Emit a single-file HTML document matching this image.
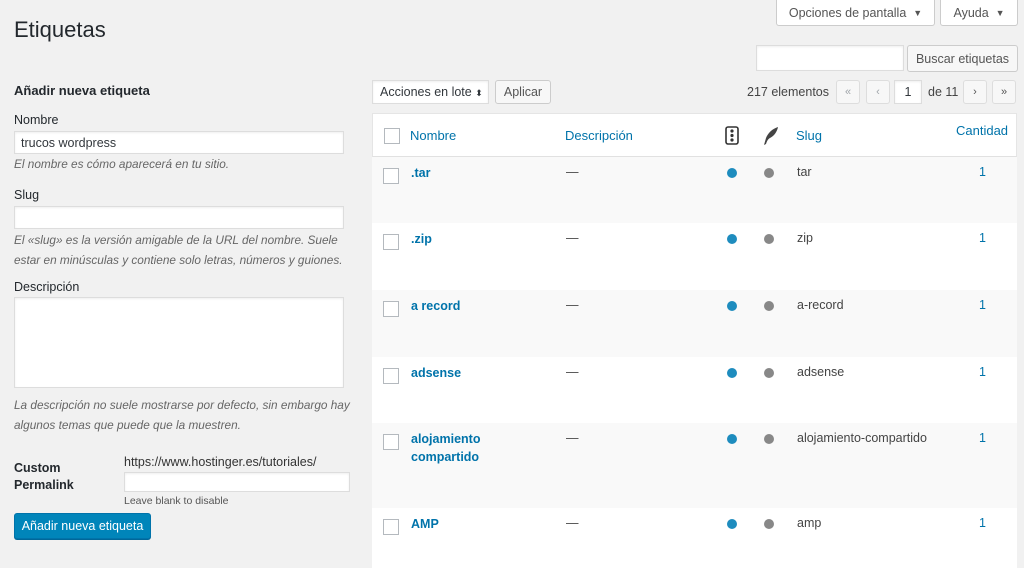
<!DOCTYPE html>
<html><head><meta charset="utf-8"><style>
*{box-sizing:border-box}
body{margin:0;width:1024px;height:563px;overflow:hidden;background:#f1f1f1;font-family:"Liberation Sans",Arial,sans-serif;font-size:12.5px;color:#444;position:relative}
.a{position:absolute;white-space:nowrap}
.btn{position:absolute;border:1px solid #ccc;background:#f7f7f7;border-radius:3px;color:#555;font-size:12.5px;display:flex;align-items:center;justify-content:center;white-space:nowrap}
.inp{position:absolute;background:#fff;border:1px solid #ddd;box-shadow:inset 0 1px 2px rgba(0,0,0,.07);white-space:nowrap}
.hint{position:absolute;font-style:italic;color:#666;font-size:11.8px;line-height:20px}
.lbl{position:absolute;font-size:12.5px;color:#23282d}
.row{position:absolute;left:372px;width:645px}
.cb{position:absolute;left:11px;width:16px;height:16px;border:1px solid #b4b9be;background:#fff}
.nm{position:absolute;left:39px;color:#0073aa;font-weight:bold;font-size:12.5px;line-height:18px}
.ds{position:absolute;left:194px}
.d1{position:absolute;left:355px;width:10px;height:10px;border-radius:50%;background:#1e8cbe}
.d2{position:absolute;left:392px;width:10px;height:10px;border-radius:50%;background:#888}
.sl{position:absolute;left:425px}
.ct{position:absolute;left:607px;color:#0073aa}
.pg{position:absolute;top:80px;height:24px;width:24px;border:1px solid #ddd;background:#f7f7f7;border-radius:3px;color:#a0a5aa;font-size:11px;display:flex;align-items:center;justify-content:center}
</style></head><body>
<div class="a" style="left:14px;top:17px;font-size:22px;color:#23282d">Etiquetas</div>
<div class="btn" style="left:776px;top:0;width:159px;height:26px;border-top:none;border-radius:0 0 3px 3px;background:#fff">Opciones de pantalla&nbsp;&nbsp;<span style="font-size:9px">▼</span></div>
<div class="btn" style="left:940px;top:0;width:78px;height:26px;border-top:none;border-radius:0 0 3px 3px;background:#fff">Ayuda&nbsp;&nbsp;<span style="font-size:9px">▼</span></div>
<div class="inp" style="left:756px;top:45px;width:148px;height:26px"></div>
<div class="btn" style="left:907px;top:45px;width:111px;height:27px">Buscar etiquetas</div>

<div class="a" style="left:14px;top:83px;font-weight:bold;font-size:13px;color:#23282d">Añadir nueva etiqueta</div>
<div class="lbl" style="left:14px;top:113px">Nombre</div>
<div class="inp" style="left:14px;top:131px;width:330px;height:23px;padding:4px 6px;font-size:12.5px;color:#32373c">trucos wordpress</div>
<div class="hint" style="left:14px;top:154px">El nombre es cómo aparecerá en tu sitio.</div>
<div class="lbl" style="left:14px;top:188px">Slug</div>
<div class="inp" style="left:14px;top:206px;width:330px;height:23px"></div>
<div class="hint" style="left:14px;top:230px;width:350px">El «slug» es la versión amigable de la URL del nombre. Suele estar en minúsculas y contiene solo letras, números y guiones.</div>
<div class="lbl" style="left:14px;top:280px">Descripción</div>
<div class="inp" style="left:14px;top:297px;width:330px;height:91px"></div>
<div class="hint" style="left:14px;top:395px;width:350px">La descripción no suele mostrarse por defecto, sin embargo hay algunos temas que puede que la muestren.</div>
<div class="a" style="left:14px;top:460px;font-weight:bold;color:#23282d;line-height:17px">Custom<br>Permalink</div>
<div class="a" style="left:124px;top:455px;color:#333">https://www.hostinger.es/tutoriales/</div>
<div class="inp" style="left:124px;top:472px;width:226px;height:20px"></div>
<div class="a" style="left:124px;top:495px;font-size:10.5px;color:#555">Leave blank to disable</div>
<div class="a" style="left:14px;top:513px;width:137px;height:26px;background:#0085ba;border:1px solid #0073aa;border-radius:3px;color:#fff;font-size:12.5px;display:flex;align-items:center;justify-content:center;box-shadow:0 1px 0 #006799">Añadir nueva etiqueta</div>

<div class="inp" style="left:372px;top:80px;width:117px;height:24px;padding:4px 7px;color:#32373c;font-size:12.5px">Acciones en lote <span style="font-size:9px">⬍</span></div>
<div class="btn" style="left:495px;top:80px;width:56px;height:24px">Aplicar</div>
<div class="a" style="left:747px;top:85px;color:#444">217 elementos</div>
<div class="pg" style="left:836px">«</div>
<div class="pg" style="left:866px">‹</div>
<div class="inp" style="left:894px;top:80px;width:28px;height:24px;text-align:center;line-height:22px;color:#32373c">1</div>
<div class="a" style="left:928px;top:85px">de 11</div>
<div class="pg" style="left:963px;color:#555">›</div>
<div class="pg" style="left:992px;color:#555">»</div>

<div class="row" style="top:113px;height:44px;background:#fff;border:1px solid #e5e5e5;border-bottom:1px solid #e1e1e1">
<div class="cb" style="top:14px"></div>
<div class="a" style="left:37px;top:14px;color:#0073aa;font-size:13px">Nombre</div>
<div class="a" style="left:192px;top:14px;color:#0073aa;font-size:13px">Descripción</div>
<svg class="a" style="left:352px;top:12px" width="14" height="19" viewBox="0 0 14 19"><rect x="1" y="1" width="12" height="17" rx="2" fill="none" stroke="#333" stroke-width="1.6"/><circle cx="7" cy="5" r="1.6" fill="#333"/><circle cx="7" cy="9.5" r="1.6" fill="#333"/><circle cx="7" cy="14" r="1.6" fill="#333"/></svg>
<svg class="a" style="left:390px;top:12px" width="16" height="20" viewBox="0 0 16 20"><path d="M15 1C9 3 5 7 3 12L1 19L3 18C4 15 5 13 7 12C11 10 14 6 15 1Z" fill="#444"/></svg>
<div class="a" style="left:423px;top:14px;color:#0073aa;font-size:13px">Slug</div>
<div class="a" style="left:583px;top:9px;color:#0073aa;font-size:13px">Cantidad</div>
</div>

<div class="row" style="top:157px;height:66px;background:#f9f9f9"><div class="cb" style="top:11px"></div><div class="nm" style="top:7px">.tar</div><div class="ds" style="top:8px">—</div><div class="d1" style="top:11px"></div><div class="d2" style="top:11px"></div><div class="sl" style="top:8px">tar</div><div class="ct" style="top:8px">1</div></div>
<div class="row" style="top:223px;height:67px;background:#fff"><div class="cb" style="top:11px"></div><div class="nm" style="top:7px">.zip</div><div class="ds" style="top:8px">—</div><div class="d1" style="top:11px"></div><div class="d2" style="top:11px"></div><div class="sl" style="top:8px">zip</div><div class="ct" style="top:8px">1</div></div>
<div class="row" style="top:290px;height:67px;background:#f9f9f9"><div class="cb" style="top:11px"></div><div class="nm" style="top:7px">a record</div><div class="ds" style="top:8px">—</div><div class="d1" style="top:11px"></div><div class="d2" style="top:11px"></div><div class="sl" style="top:8px">a-record</div><div class="ct" style="top:8px">1</div></div>
<div class="row" style="top:357px;height:66px;background:#fff"><div class="cb" style="top:11px"></div><div class="nm" style="top:7px">adsense</div><div class="ds" style="top:8px">—</div><div class="d1" style="top:11px"></div><div class="d2" style="top:11px"></div><div class="sl" style="top:8px">adsense</div><div class="ct" style="top:8px">1</div></div>
<div class="row" style="top:423px;height:85px;background:#f9f9f9"><div class="cb" style="top:11px"></div><div class="nm" style="top:7px">alojamiento<br>compartido</div><div class="ds" style="top:8px">—</div><div class="d1" style="top:11px"></div><div class="d2" style="top:11px"></div><div class="sl" style="top:8px">alojamiento-compartido</div><div class="ct" style="top:8px">1</div></div>
<div class="row" style="top:508px;height:60px;background:#fff"><div class="cb" style="top:11px"></div><div class="nm" style="top:7px">AMP</div><div class="ds" style="top:8px">—</div><div class="d1" style="top:11px"></div><div class="d2" style="top:11px"></div><div class="sl" style="top:8px">amp</div><div class="ct" style="top:8px">1</div></div>
</body></html>
